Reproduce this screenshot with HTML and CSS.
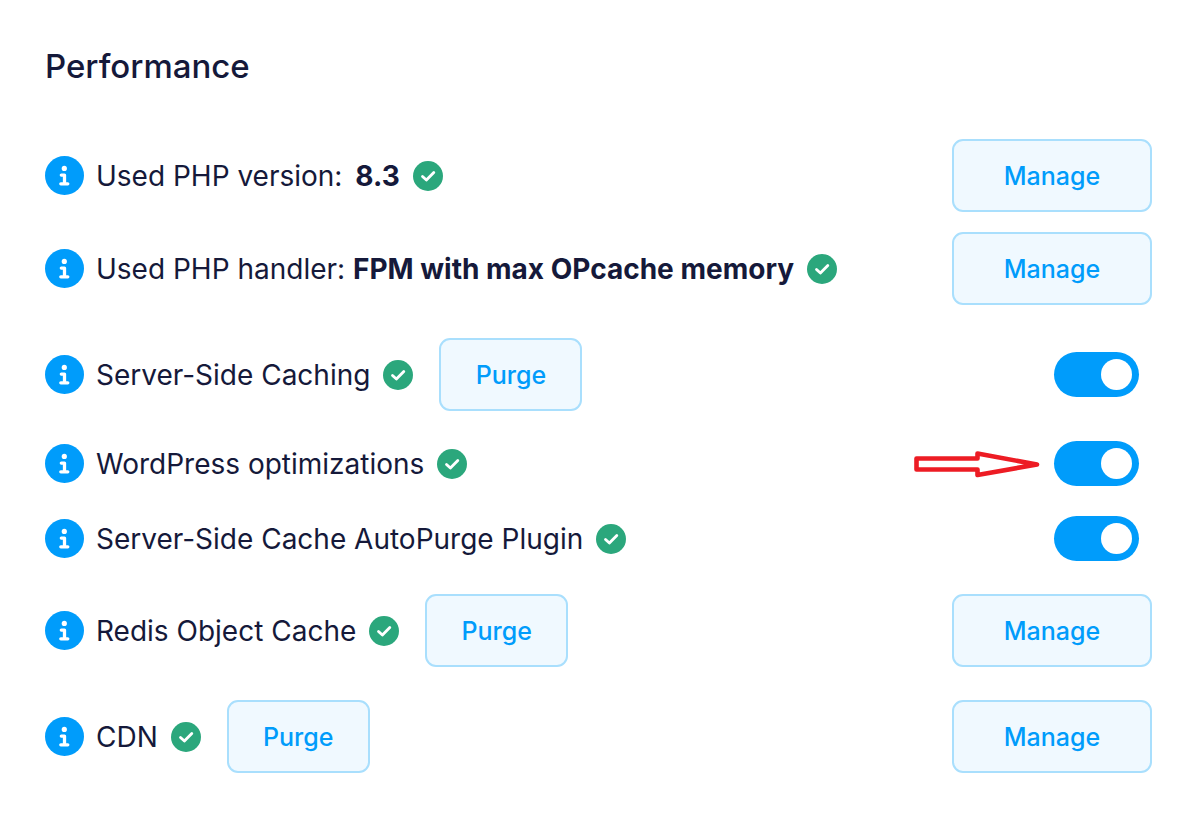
FILE: index.html
```html
<!DOCTYPE html>
<html lang="en">
<head>
<meta charset="utf-8">
<title>Performance</title>
<link rel="stylesheet" href="styles.css">
</head>
<body>
<svg class="symbols" aria-hidden="true">
  <symbol id="info" viewBox="0 0 39 39">
    <circle cx="19.5" cy="19.5" r="19.5" fill="#009cfb"/>
    <circle cx="19.3" cy="12.4" r="2.6" fill="#fff"/>
    <path d="M16.3 19.1h3.2v8.4M15.8 27.8h7" fill="none" stroke="#fff" stroke-width="3.3" stroke-linecap="round" stroke-linejoin="round"/>
  </symbol>
  <symbol id="check" viewBox="0 0 30 30">
    <circle cx="15" cy="15" r="15" fill="#2ba77c"/>
    <path d="M9.5 15.4l3.9 3.7 7.4-7.6" fill="none" stroke="#fff" stroke-width="2.8" stroke-linecap="round" stroke-linejoin="round"/>
  </symbol>
</svg>
<main class="panel">
  <h1 class="title">Performance</h1>
  <ul class="settings">
    <li class="row">
      <svg class="info"><use href="#info"/></svg>
      <span class="label">Used PHP version: <strong class="version">8.3</strong></span>
      <svg class="check"><use href="#check"/></svg>
      <button class="btn manage" type="button">Manage</button>
    </li>
    <li class="row snug">
      <svg class="info"><use href="#info"/></svg>
      <span class="label">Used PHP handler: <strong>FPM with max OPcache memory</strong></span>
      <svg class="check"><use href="#check"/></svg>
      <button class="btn manage" type="button">Manage</button>
    </li>
    <li class="row">
      <svg class="info"><use href="#info"/></svg>
      <label class="label" for="caching">Server-Side Caching</label>
      <svg class="check"><use href="#check"/></svg>
      <button class="btn purge" type="button">Purge</button>
      <input class="toggle" id="caching" type="checkbox" role="switch" checked>
    </li>
    <li class="row compact">
      <svg class="info"><use href="#info"/></svg>
      <label class="label" for="optimizations">WordPress optimizations</label>
      <svg class="check"><use href="#check"/></svg>
      <svg class="arrow" viewBox="0 0 128 30" aria-hidden="true"><path d="M2.5 9.5H63.5V4.5L123 15.5 63.5 26V20.5H2.5Z" fill="#fff" stroke="#ed1c24" stroke-width="4.6" stroke-linejoin="round"/></svg>
      <input class="toggle" id="optimizations" type="checkbox" role="switch" checked>
    </li>
    <li class="row compact">
      <svg class="info"><use href="#info"/></svg>
      <label class="label" for="autopurge">Server-Side Cache AutoPurge Plugin</label>
      <svg class="check"><use href="#check"/></svg>
      <input class="toggle" id="autopurge" type="checkbox" role="switch" checked>
    </li>
    <li class="row">
      <svg class="info"><use href="#info"/></svg>
      <span class="label">Redis Object Cache</span>
      <svg class="check"><use href="#check"/></svg>
      <button class="btn purge" type="button">Purge</button>
      <button class="btn manage" type="button">Manage</button>
    </li>
    <li class="row">
      <svg class="info"><use href="#info"/></svg>
      <span class="label">CDN</span>
      <svg class="check"><use href="#check"/></svg>
      <button class="btn purge" type="button">Purge</button>
      <button class="btn manage" type="button">Manage</button>
    </li>
  </ul>
</main>
</body>
</html>
```
FILE: styles.css
```css
* { box-sizing: border-box; }
body {
  margin: 0;
  background: #fff;
  color: #15193a;
  font-family: Inter, "Liberation Sans", sans-serif;
  font-size: 28px;
  line-height: 36px;
}
.symbols { position: absolute; width: 0; height: 0; }
.panel { padding: 44px 41px 40px 45px; }
.title {
  margin: 0 0 51px;
  font-size: 33px;
  font-weight: 500;
  line-height: 44px;
}
.settings { margin: 0; padding: 0; list-style: none; }
.row {
  display: flex;
  align-items: center;
  min-height: 73px;
  margin-top: 33px;
}
.row:first-child { margin-top: 0; }
.row.snug { margin-top: 20px; }
.row.compact { min-height: 45px; margin-top: 30px; }
.info { flex: none; width: 39px; height: 39px; margin-right: 12px; }
.check { flex: none; width: 30px; height: 30px; margin-left: 13px; }
.label { white-space: nowrap; }
.label strong { font-weight: 700; }
.version { margin-left: 5px; }
.btn {
  height: 73px;
  border: 2px solid #a9dffd;
  border-radius: 11px;
  background: #f0f9ff;
  color: #009cfb;
  font: inherit;
  font-size: 25px;
  font-weight: 500;
  cursor: pointer;
}
.purge { width: 143px; margin-left: 26px; }
.manage { width: 200px; margin-left: auto; }
.arrow { width: 128px; height: 30px; margin-left: auto; margin-right: 12px; }
.toggle {
  display: flex;
  align-items: center;
  justify-content: flex-end;
  flex: none;
  appearance: none;
  width: 85px;
  height: 45px;
  margin: 0 13px 0 auto;
  padding: 7px;
  border-radius: 23px;
  background: #009cfb;
  cursor: pointer;
}
.arrow + .toggle { margin-left: 0; }
.toggle::before {
  content: "";
  width: 31px;
  height: 31px;
  border-radius: 50%;
  background: #fff;
}
.toggle:not(:checked) { justify-content: flex-start; background: #b8c4d0; }
```
